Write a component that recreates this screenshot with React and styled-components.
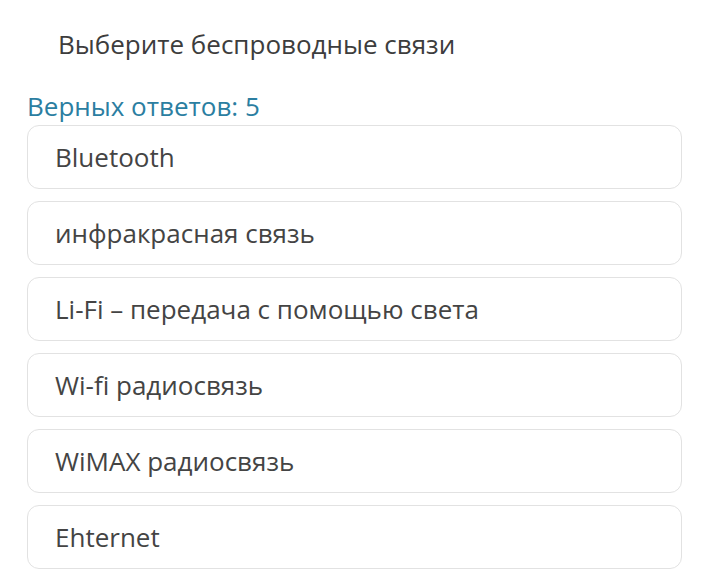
import React from 'react';
import styled, { createGlobalStyle } from 'styled-components';

const Global = createGlobalStyle`
  body {
    margin: 0;
    background: #ffffff;
    font-family: "Open Sans", "Liberation Sans", sans-serif;
  }
`;

const Page = styled.div`
  padding: 26px 32px 0 27px;
`;

const Question = styled.h2`
  margin: 0 0 0 31px;
  font-size: 26px;
  font-weight: 400;
  line-height: 36px;
  color: #3d3d3d;
`;

const Hint = styled.div`
  margin-top: 28px;
  margin-bottom: 3px;
  font-size: 26px;
  line-height: 32px;
  color: #2b7ea1;
`;

const List = styled.div`
  display: flex;
  flex-direction: column;
  gap: 12px;
`;

const Option = styled.div`
  display: flex;
  align-items: center;
  height: 62px;
  padding-left: 27px;
  border: 1px solid #e2e2e2;
  border-radius: 12px;
  font-size: 26px;
  color: #444444;
`;

const answers = [
  'Bluetooth',
  'инфракрасная связь',
  'Li-Fi – передача с помощью света',
  'Wi-fi радиосвязь',
  'WiMAX радиосвязь',
  'Ehternet',
];

export default function App() {
  return (
    <>
      <Global />
      <Page>
        <Question>Выберите беспроводные связи</Question>
        <Hint>Верных ответов: 5</Hint>
        <List>
          {answers.map(a => (
            <Option key={a}>{a}</Option>
          ))}
        </List>
      </Page>
    </>
  );
}
